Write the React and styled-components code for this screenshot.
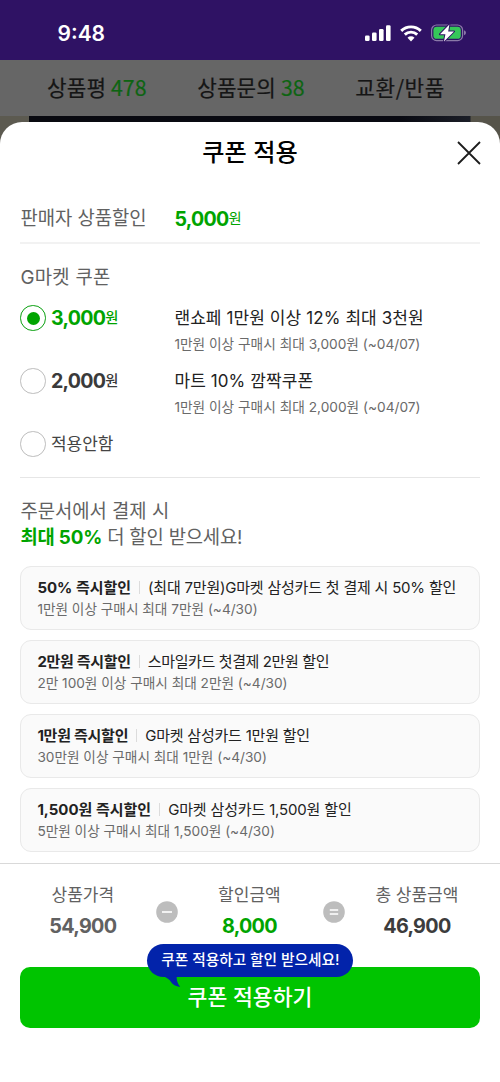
import React from "react";
import styled, { createGlobalStyle } from "styled-components";

const GlobalStyle = createGlobalStyle`
  * { box-sizing: border-box; }
  body {
    margin: 0;
    background: #fff;
    font-family: Inter, "Noto Sans CJK KR", sans-serif;
    color: #222;
  }
`;

const Screen = styled.div`
  width: 500px;
  height: 1082px;
  overflow: hidden;
  display: flex;
  flex-direction: column;
  background: #5f5f5d;
`;

const StatusBar = styled.header`
  height: 60px;
  flex: none;
  padding: 6px 33px 0 57.5px;
  display: flex;
  align-items: center;
  justify-content: space-between;
  background: #2f1264;
  color: #fff;
`;

const Clock = styled.span`
  font-size: 21px;
  font-weight: 600;
`;

const StatusIcons = styled.div`
  display: flex;
  align-items: center;
  gap: 9px;
`;

const Tabs = styled.nav`
  height: 56px;
  flex: none;
  padding: 0 55px 0 47px;
  display: flex;
  align-items: center;
  justify-content: space-between;
  background: #666;
`;

const Tab = styled.span`
  font-family: "Noto Sans CJK KR", sans-serif;
  font-size: 21.3px;
  line-height: 54px;
  height: 56px;
  letter-spacing: ${(p) => p.$track || "0.1px"};
  color: #151515;
  white-space: nowrap;
  -webkit-text-stroke: 0.2px currentColor;
`;

const TabCount = styled.span`
  color: #0d6412;
`;

const Photo = styled.div`
  height: 30px;
  flex: none;
  margin-bottom: -24px;
  background: linear-gradient(90deg, #5c5a50 29px, #090a10 29px, #090a12 400px, #1b1e27 470px, #56544a 471px);
`;

const Sheet = styled.main`
  position: relative;
  flex: 1;
  min-height: 0;
  display: flex;
  flex-direction: column;
  background: #fff;
  border-radius: 22px 22px 0 0;
`;

const SheetHeader = styled.div`
  height: 61px;
  flex: none;
  display: grid;
  grid-template-columns: 62px 1fr 62px;
  align-items: center;
  justify-items: center;
`;

const Title = styled.h1`
  grid-column: 2;
  margin: 0;
  font-size: 24.2px;
  font-weight: 500;
  line-height: 61px;
  color: #000;
`;

const CloseButton = styled.button`
  padding: 0;
  border: 0;
  background: none;
  display: flex;
`;

const Body = styled.div`
  height: 680px;
  flex: none;
  overflow: hidden;
  padding: 0 20.4px;
`;

const SellerRow = styled.section`
  height: 61px;
  padding-top: 21px;
  display: grid;
  grid-template-columns: 154px 1fr;
  border-bottom: 2px solid #f2f2f2;
`;

const Heading = styled.h2`
  margin: 0;
  font-size: 18.8px;
  font-weight: 400;
  line-height: 30px;
  letter-spacing: ${(p) => p.$track || "0"};
  color: #616161;
  white-space: nowrap;
`;

const Amount = styled.span`
  display: flex;
  align-items: baseline;
  font-size: 19.6px;
  font-weight: 700;
  line-height: ${(p) => p.$line || "28px"};
  letter-spacing: -0.7px;
  color: ${(p) => p.$color};
`;

const Won = styled.span`
  font-size: 14.3px;
  font-weight: ${(p) => p.$weight || 500};
  line-height: 1;
  transform: translateY(-2px);
`;

const CouponSection = styled.section`
  height: 234px;
  padding-top: 19px;
  border-bottom: 1px solid #e6e6e6;
`;

const CouponList = styled.div`
  margin-top: 12px;
`;

const CouponRow = styled.label`
  display: grid;
  grid-template-columns: 154px 1fr;
  height: 63px;
`;

const Choice = styled.span`
  display: flex;
  align-items: center;
  gap: 5px;
  height: 26px;
`;

const Radio = styled.span`
  width: 25.5px;
  height: 25.5px;
  display: flex;
  align-items: center;
  justify-content: center;
  border: 1.5px solid ${(p) => (p.$on ? "#0aa00f" : "#bdbdbd")};
  border-radius: 50%;
  &::after {
    content: "";
    width: 13px;
    height: 13px;
    border-radius: 50%;
    background: ${(p) => (p.$on ? "#00a400" : "transparent")};
  }
`;

const NoneLabel = styled.span`
  font-size: 17px;
  line-height: 26px;
  height: 26px;
  color: #444;
`;

const CouponText = styled.span`
  display: flex;
  flex-direction: column;
  white-space: nowrap;
`;

const CouponName = styled.span`
  font-size: 17px;
  line-height: 26px;
  letter-spacing: 0.1px;
  color: #222;
`;

const CouponNote = styled.span`
  font-size: 13.7px;
  line-height: 26px;
  color: #6a6a6a;
`;

const Promo = styled.section`
  padding-top: 21px;
`;

const PromoHeading = styled(Heading)`
  line-height: 26px;
`;

const Highlight = styled.strong`
  font-weight: 700;
  color: #00a400;
`;

const CardList = styled.ul`
  margin: 14.5px 0 0;
  padding: 0;
  list-style: none;
  display: flex;
  flex-direction: column;
  gap: 10.3px;
`;

const Card = styled.li`
  height: 64px;
  padding: 8px 16px 0;
  border: 1px solid #e9e9e9;
  border-radius: 11px;
  background: #fafafa;
  white-space: nowrap;
`;

const CardTop = styled.div`
  display: flex;
  align-items: center;
  height: 23px;
  font-size: 15px;
  color: #222;
`;

const CardTitle = styled.strong`
  font-weight: 700;
  letter-spacing: ${(p) => p.$track}px;
`;

const CardText = styled.span`
  letter-spacing: ${(p) => p.$track}px;
`;

const Bar = styled.span`
  width: 1px;
  height: 13px;
  margin: 2px 8px 0;
  background: #dcdcdc;
`;

const CardNote = styled.div`
  margin-top: 1px;
  font-size: 13.65px;
  line-height: 21px;
  color: #6a6a6a;
`;

const Footer = styled.footer`
  flex: 1;
  padding: 17px 20.4px 0;
  border-top: 1px solid #d9d9d9;
`;

const Summary = styled.div`
  display: grid;
  grid-template-columns: 125px 44px 120px 50px 115px;
  justify-items: center;
  align-items: center;
`;

const SummaryItem = styled.div`
  display: flex;
  flex-direction: column;
  align-items: center;
  white-space: nowrap;
`;

const SummaryLabel = styled.span`
  font-size: 17px;
  line-height: 28px;
  color: #616161;
`;

const SummaryValue = styled.span`
  font-size: 19.8px;
  font-weight: 700;
  height: 33px;
  line-height: 35px;
  letter-spacing: -0.7px;
  color: ${(p) => p.$color};
`;

const Action = styled.div`
  position: relative;
  margin-top: 25px;
`;

const ApplyButton = styled.button`
  width: 100%;
  height: 61px;
  padding: 0;
  border: 0;
  border-radius: 10px;
  background: #00c400;
  color: #fff;
  font-family: inherit;
  font-size: 21.6px;
  font-weight: 500;
  line-height: 61px;
`;

const Bubble = styled.div`
  position: absolute;
  left: 126.5px;
  top: -23px;
  width: 206px;
  height: 33px;
  padding-left: 1px;
  border-radius: 17px;
  background: #0223aa;
  color: #fff;
  font-size: 14.7px;
  font-weight: 500;
  line-height: 33px;
  text-align: center;
  white-space: nowrap;
`;

const Tail = styled.svg`
  position: absolute;
  left: 17px;
  top: 31px;
`;

const coupons = [
  { amount: "3,000", name: "랜쇼페 1만원 이상 12% 최대 3천원", note: "1만원 이상 구매시 최대 3,000원 (~04/07)", on: true },
  { amount: "2,000", name: "마트 10% 깜짝쿠폰", note: "1만원 이상 구매시 최대 2,000원 (~04/07)" },
];

const cards = [
  { title: "50% 즉시할인", text: "(최대 7만원)G마켓 삼성카드 첫 결제 시 50% 할인", note: "1만원 이상 구매시 최대 7만원 (~4/30)", titleTrack: 0, textTrack: -0.21 },
  { title: "2만원 즉시할인", text: "스마일카드 첫결제 2만원 할인", note: "2만 100원 이상 구매시 최대 2만원 (~4/30)", titleTrack: -0.3, textTrack: -0.38 },
  { title: "1만원 즉시할인", text: "G마켓 삼성카드 1만원 할인", note: "30만원 이상 구매시 최대 1만원 (~4/30)", titleTrack: -0.25, textTrack: -0.22 },
  { title: "1,500원 즉시할인", text: "G마켓 삼성카드 1,500원 할인", note: "5만원 이상 구매시 최대 1,500원 (~4/30)", titleTrack: 0, textTrack: -0.16 },
];

function Signal() {
  return (
    <svg width="26" height="17" viewBox="0 0 26 17" fill="#fff">
      <rect x="0" y="10.5" width="4.6" height="5.5" rx="1.3" />
      <rect x="7" y="7.5" width="4.6" height="8.5" rx="1.3" />
      <rect x="14" y="4" width="4.6" height="12" rx="1.3" />
      <rect x="21" y="0.3" width="4.6" height="15.7" rx="1.3" />
    </svg>
  );
}

function Wifi() {
  return (
    <svg width="22" height="17" viewBox="0 0 22 17" fill="none" stroke="#fff" strokeWidth="2.9">
      <path d="M1.2 5.9a14 14 0 0 1 19.6 0" />
      <path d="M4.8 9.6a8.9 8.9 0 0 1 12.4 0" />
      <path d="M11 16.4 7.5 12.8a5 5 0 0 1 7 0Z" fill="#fff" stroke="none" />
    </svg>
  );
}

function Battery() {
  return (
    <svg width="36" height="18" viewBox="0 0 36 18">
      <rect x="0.6" y="1" width="31" height="15.6" rx="5" fill="none" stroke="#8a79a8" strokeWidth="1.2" />
      <rect x="2.4" y="2.8" width="27.4" height="12" rx="3.4" fill="#35c759" />
      <path d="M33 6.3q2 .7 2 2.5t-2 2.5z" fill="#8a79a8" />
      <path d="M18.4.4 9 10.2h5.400L13 17.4 23 7.4h-5.800z" fill="#fff" stroke="#2f1264" strokeWidth="2" strokeLinejoin="round" paintOrder="stroke" />
    </svg>
  );
}

function Operator({ equal }) {
  return (
    <svg width="22" height="22" viewBox="0 0 22 22">
      <circle cx="11" cy="11" r="10.8" fill="#bdbdbd" />
      {equal ? (
        <path d="M6.8 8.9h8.4M6.8 12.9h8.4" stroke="#fff" strokeWidth="1.5" />
      ) : (
        <path d="M6 11h10" stroke="#fff" strokeWidth="1.6" />
      )}
    </svg>
  );
}

export default function App() {
  return (
    <Screen>
      <GlobalStyle />
      <StatusBar>
        <Clock>9:48</Clock>
        <StatusIcons>
          <Signal />
          <Wifi />
          <Battery />
        </StatusIcons>
      </StatusBar>
      <Tabs>
        <Tab>상품평 <TabCount>478</TabCount></Tab>
        <Tab>상품문의 <TabCount>38</TabCount></Tab>
        <Tab $track="0.6px">교환/반품</Tab>
      </Tabs>
      <Photo />
      <Sheet>
        <SheetHeader>
          <Title>쿠폰 적용</Title>
          <CloseButton aria-label="닫기">
            <svg width="24" height="24" viewBox="0 0 24 24" fill="none" stroke="#1c1c1c" strokeWidth="1.8">
              <path d="M1 1l22 22M23 1 1 23" />
            </svg>
          </CloseButton>
        </SheetHeader>
        <Body>
          <SellerRow>
            <Heading>판매자 상품할인</Heading>
            <Amount $color="#00a400" $line="30px">5,000<Won $weight={400}>원</Won></Amount>
          </SellerRow>
          <CouponSection>
            <Heading $track="0.3px">G마켓 쿠폰</Heading>
            <CouponList>
              {coupons.map((c) => (
                <CouponRow key={c.amount}>
                  <Choice>
                    <Radio $on={c.on} />
                    <Amount $color={c.on ? "#00a400" : "#3a3a3a"}>{c.amount}<Won>원</Won></Amount>
                  </Choice>
                  <CouponText>
                    <CouponName>{c.name}</CouponName>
                    <CouponNote>{c.note}</CouponNote>
                  </CouponText>
                </CouponRow>
              ))}
              <CouponRow>
                <Choice>
                  <Radio />
                  <NoneLabel>적용안함</NoneLabel>
                </Choice>
              </CouponRow>
            </CouponList>
          </CouponSection>
          <Promo>
            <PromoHeading>주문서에서 결제 시</PromoHeading>
            <PromoHeading $track="-0.18px"><Highlight>최대 50%</Highlight> 더 할인 받으세요!</PromoHeading>
            <CardList>
              {cards.map((c) => (
                <Card key={c.title}>
                  <CardTop>
                    <CardTitle $track={c.titleTrack}>{c.title}</CardTitle>
                    <Bar />
                    <CardText $track={c.textTrack}>{c.text}</CardText>
                  </CardTop>
                  <CardNote>{c.note}</CardNote>
                </Card>
              ))}
              <Card />
            </CardList>
          </Promo>
        </Body>
        <Footer>
          <Summary>
            <SummaryItem>
              <SummaryLabel>상품가격</SummaryLabel>
              <SummaryValue $color="#616161">54,900</SummaryValue>
            </SummaryItem>
            <Operator />
            <SummaryItem>
              <SummaryLabel>할인금액</SummaryLabel>
              <SummaryValue $color="#00a400">8,000</SummaryValue>
            </SummaryItem>
            <Operator equal />
            <SummaryItem>
              <SummaryLabel>총 상품금액</SummaryLabel>
              <SummaryValue $color="#3c3c3c">46,900</SummaryValue>
            </SummaryItem>
          </Summary>
          <Action>
            <ApplyButton>쿠폰 적용하기</ApplyButton>
            <Bubble>
              쿠폰 적용하고 할인 받으세요!
              <Tail width="17" height="13" viewBox="0 0 17 13">
                <path d="M0 0h13c-1 4 .2 8 3.2 12C11.500 11.4 8.5 9.5 7 7 5.5 4.5 3.5 3 0 1.5z" fill="#0223aa" />
              </Tail>
            </Bubble>
          </Action>
        </Footer>
      </Sheet>
    </Screen>
  );
}
